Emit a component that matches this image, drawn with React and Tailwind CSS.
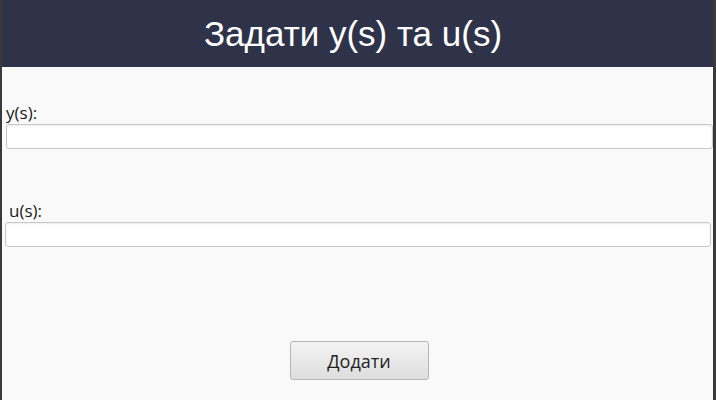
export default function App() {
  return (
    <div className="w-[716px] h-[400px] flex bg-[#3c3c3c]">
      <div className="w-[2px] bg-[#3a3a3a]" />
      <div className="flex-1 flex flex-col bg-[#f9f9f9]">
        <div className="h-[67px] bg-[#2f3349] flex items-center justify-center">
          <span className="text-white text-[35px] leading-none pr-[9px] pb-[1px]" style={{ fontFamily: '"Liberation Sans", Arial, sans-serif' }}>
            Задати y(s) та u(s)
          </span>
        </div>
        <div className="flex flex-col" style={{ fontFamily: '"Open Sans", "Noto Sans", sans-serif' }}>
          <div className="mt-[35px] ml-[4px] text-[17px] leading-[22px] text-[#1a1a1a]">y(s):</div>
          <input className="ml-[4px] h-[25px] bg-white border border-[#c8c8c8] rounded-[3px] shadow-[inset_0_1px_2px_rgba(0,0,0,0.08)] outline-none" />
          <div className="mt-[51px] ml-[7px] text-[17px] leading-[22px] text-[#1a1a1a]">u(s):</div>
          <input className="ml-[3px] mr-[2px] h-[25px] bg-white border border-[#c8c8c8] rounded-[3px] shadow-[inset_0_1px_2px_rgba(0,0,0,0.08)] outline-none" />
          <div className="mt-[94px] flex justify-center pl-[3px]">
            <button className="w-[139px] h-[39px] rounded-[3px] border border-[#b4b4b4] bg-gradient-to-b from-[#f4f4f4] to-[#dedede] text-[18px] text-[#222] pt-[1px]">
              Додати
            </button>
          </div>
        </div>
      </div>
      <div className="w-[3px] bg-[#3a3a3a]" />
    </div>
  );
}
